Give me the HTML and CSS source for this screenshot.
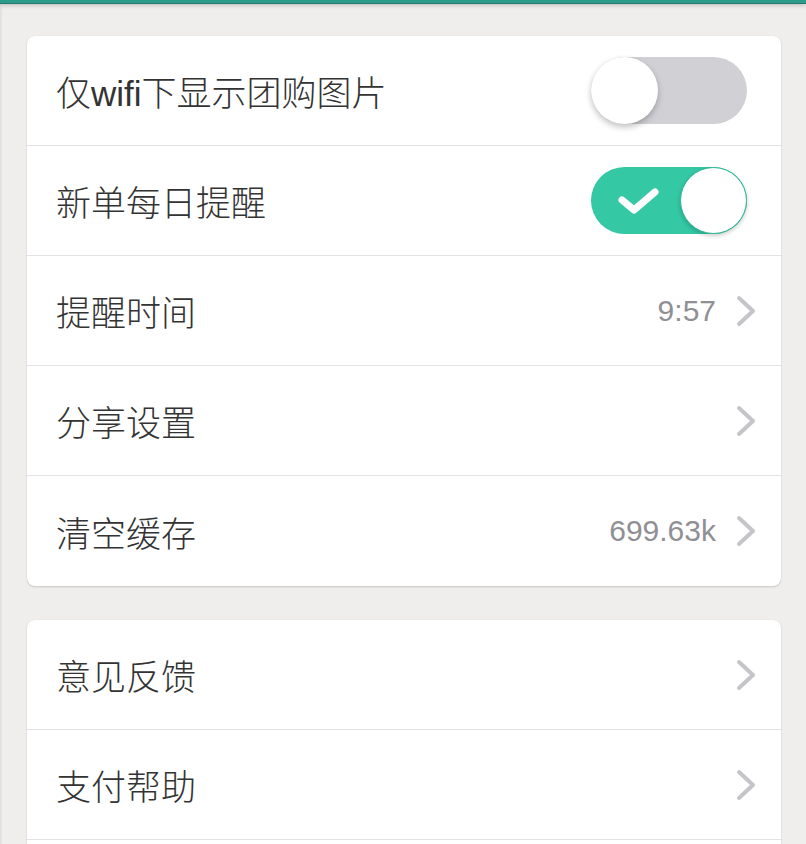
FILE: index.html
```html
<!DOCTYPE html>
<html lang="zh-CN">
<head>
<meta charset="utf-8">
<title>设置</title>
<link rel="stylesheet" href="styles.css">
</head>
<body>
<div class="topbar"></div>
<div class="page">
  <section class="card">
    <div class="row">
      <span class="label">仅wifi下显示团购图片</span>
      <div class="toggle off"><span class="knob"></span></div>
    </div>
    <div class="row">
      <span class="label">新单每日提醒</span>
      <div class="toggle on">
        <svg class="check" width="45" height="30" viewBox="0 0 45 30"><polyline points="6,14 18,24 39,6" fill="none" stroke="#fff" stroke-width="7" stroke-linecap="round" stroke-linejoin="round"/></svg>
        <span class="knob"></span>
      </div>
    </div>
    <div class="row">
      <span class="label">提醒时间</span>
      <span class="right"><span class="value">9:57</span><svg class="chev" width="20" height="32" viewBox="0 0 20 32"><polyline points="3,3 17,16 3,29" fill="none" stroke="#c5c5c9" stroke-width="4" stroke-linecap="round" stroke-linejoin="round"/></svg></span>
    </div>
    <div class="row">
      <span class="label">分享设置</span>
      <span class="right"><svg class="chev" width="20" height="32" viewBox="0 0 20 32"><polyline points="3,3 17,16 3,29" fill="none" stroke="#c5c5c9" stroke-width="4" stroke-linecap="round" stroke-linejoin="round"/></svg></span>
    </div>
    <div class="row">
      <span class="label">清空缓存</span>
      <span class="right"><span class="value">699.63k</span><svg class="chev" width="20" height="32" viewBox="0 0 20 32"><polyline points="3,3 17,16 3,29" fill="none" stroke="#c5c5c9" stroke-width="4" stroke-linecap="round" stroke-linejoin="round"/></svg></span>
    </div>
  </section>
  <section class="card">
    <div class="row">
      <span class="label">意见反馈</span>
      <span class="right"><svg class="chev" width="20" height="32" viewBox="0 0 20 32"><polyline points="3,3 17,16 3,29" fill="none" stroke="#c5c5c9" stroke-width="4" stroke-linecap="round" stroke-linejoin="round"/></svg></span>
    </div>
    <div class="row">
      <span class="label">支付帮助</span>
      <span class="right"><svg class="chev" width="20" height="32" viewBox="0 0 20 32"><polyline points="3,3 17,16 3,29" fill="none" stroke="#c5c5c9" stroke-width="4" stroke-linecap="round" stroke-linejoin="round"/></svg></span>
    </div>
    <div class="row"></div>
  </section>
</div>
</body>
</html>
```
FILE: styles.css
```css
html, body {
  margin: 0;
  padding: 0;
  background: #efeeec;
  overflow: hidden;
}
body {
  font-family: "Liberation Sans", "Noto Sans CJK SC", sans-serif;
  color: #333;
}
.topbar {
  height: 3px;
  background: #2c9b8b;
  border-bottom: 1px solid #237a6e;
  box-shadow: 0 1px 4px rgba(0, 0, 0, 0.25);
  position: relative;
  z-index: 1;
}
.page {
  display: flex;
  flex-direction: column;
  gap: 34px;
  padding: 32px 25px 0 25px;
  border-left: 2px solid #e2e2e2;
  min-height: 844px;
}
.card {
  background: #fff;
  border-radius: 8px;
  box-shadow: 0 1px 2px rgba(0, 0, 0, 0.16), 0 0 1px rgba(0, 0, 0, 0.08);
  display: flex;
  flex-direction: column;
}
.row {
  height: 110px;
  box-sizing: border-box;
  display: flex;
  align-items: center;
  justify-content: space-between;
  padding: 0 25px 0 29px;
  border-bottom: 1px solid #e3e3e5;
}
.row:last-child {
  border-bottom: none;
}
.label {
  font-family: "Liberation Sans", "Noto Sans CJK SC", sans-serif;
  font-size: 35px;
  font-weight: 300;
  color: #333;
}
.right {
  display: flex;
  align-items: center;
  gap: 20px;
}
.value {
  font-family: "Liberation Sans", sans-serif;
  font-size: 30px;
  color: #8f8f94;
}
.chev {
  display: block;
}
.toggle {
  width: 156px;
  height: 67px;
  border-radius: 34px;
  box-sizing: border-box;
  display: flex;
  align-items: center;
  margin-right: 9px;
}
.toggle.off {
  background: #d1d1d5;
  justify-content: flex-start;
}
.toggle.on {
  background: #34c8a5;
  justify-content: space-between;
  padding-left: 25px;
}
.knob {
  width: 67px;
  height: 67px;
  border-radius: 50%;
  background: #fff;
  box-shadow: 0 3px 6px rgba(0, 0, 0, 0.25);
  box-sizing: border-box;
}
.toggle.on .knob {
  border: 1px solid #2fb896;
  box-shadow: 0 2px 4px rgba(0, 0, 0, 0.2);
}
.check {
  display: block;
}
```
